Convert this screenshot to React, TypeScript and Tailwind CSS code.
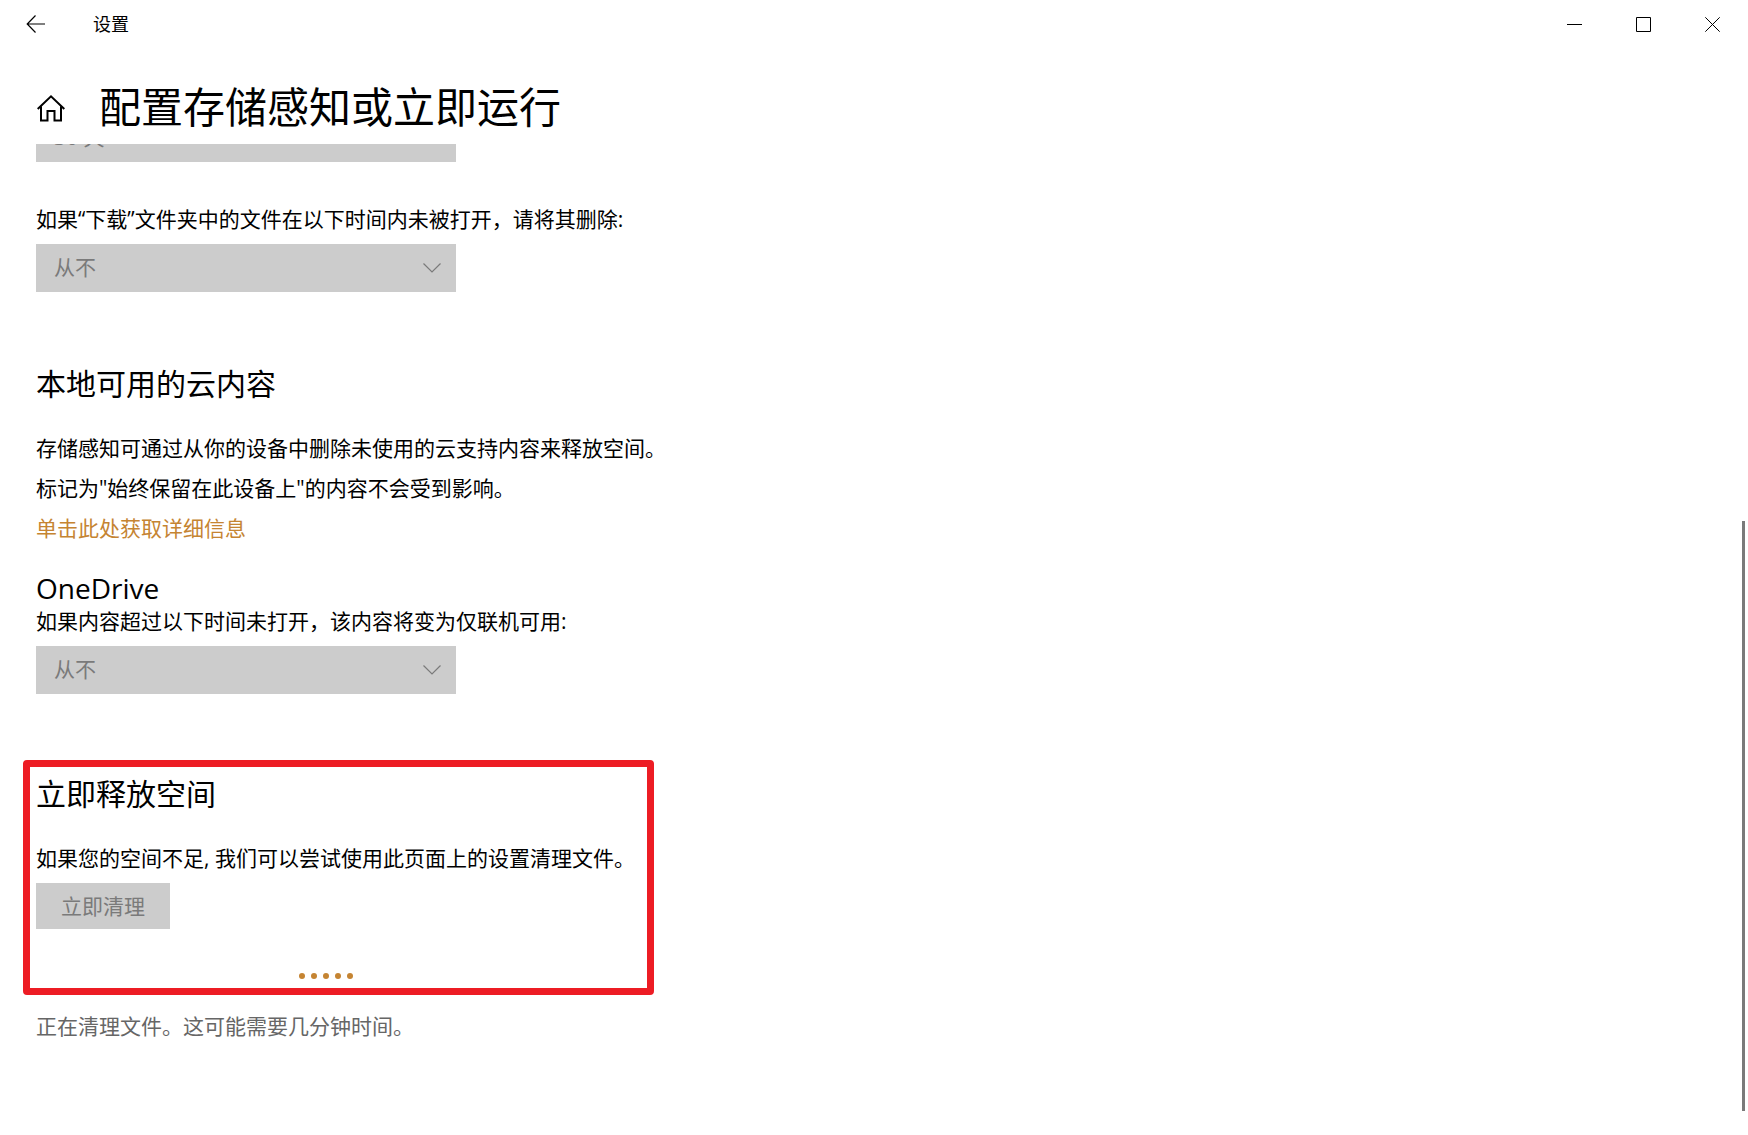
import { useId } from 'react';
import type { ReactNode } from 'react';

type DropdownProps = {
	label: ReactNode;
	value: string;
	hideLabel?: boolean;
};

const Dropdown = ({ label, value, hideLabel = false }: DropdownProps) => {
	const id = useId();
	return (
		<div className="flex w-full flex-col gap-[11px]">
			<label htmlFor={id} className={hideLabel ? 'sr-only' : 'leading-7'}>
				{label}
			</label>
			<div className="relative w-full max-w-[420px]">
				<select
					id={id}
					disabled
					className="block h-12 w-full appearance-none rounded-none bg-[#cccccc] pl-[18px] pr-12 text-[#7a7a7a]"
				>
					<option>{value}</option>
				</select>
				<svg
					className="pointer-events-none absolute right-[14px] top-[18px]"
					width="20"
					height="12"
					viewBox="0 0 20 12"
					fill="none"
					stroke="#7a7a7a"
					strokeWidth="1.2"
				>
					<path d="M1.5 1.5 10 10l8.500-8.500" />
				</svg>
			</div>
		</div>
	);
};

const TitleBar = () => {
	return (
		<header className="flex h-12 items-center pr-px">
			<button aria-label="返回" className="flex h-12 w-[72px] items-center justify-center">
				<svg width="20" height="19" viewBox="0 0 20 19" fill="none" stroke="#000" strokeWidth="1.2">
					<path d="M19 9H1.500M9.500.500 1.200 9l8.300 8.500" />
				</svg>
			</button>
			<span className="ml-[21px] grow text-lg leading-7">设置</span>
			<button aria-label="最小化" className="flex h-12 w-[69px] items-center justify-center">
				<svg width="15" height="15" viewBox="0 0 15 15" stroke="#000">
					<path d="M0 7.500h15" />
				</svg>
			</button>
			<button aria-label="最大化" className="flex h-12 w-[69px] items-center justify-center">
				<svg width="15" height="15" viewBox="0 0 15 15" fill="none" stroke="#000">
					<path d="M.5.5h14v14H.5z" />
				</svg>
			</button>
			<button aria-label="关闭" className="flex h-12 w-[69px] items-center justify-center">
				<svg width="15" height="15" viewBox="0 0 15 15" stroke="#000">
					<path d="m.3.3 14.400 14.400M14.700.3.300 14.700" />
				</svg>
			</button>
		</header>
	);
};

const Home = () => {
	return (
		<button aria-label="主页" className="flex h-12 w-[30px] items-center justify-center">
			<svg width="30" height="28" viewBox="0 0 30 28" fill="none" stroke="#000" strokeWidth="2">
				<path d="M1.700 15 15 2.300l13.300 12.700" />
				<path d="M5 12.300V26.500h6.500v-9.500h7v9.500H25V12.300" />
			</svg>
		</button>
	);
};

const App = () => {
	return (
		<div className="flex h-screen min-h-[1100px] flex-col bg-white font-['Open_Sans','Noto_Sans_CJK_SC',sans-serif] text-[21px] text-black">
			<TitleBar />
			<div className="flex items-center gap-[33px] pb-3 pl-9 pt-9">
				<Home />
				<h1 className="pb-[2px] text-[42px] leading-[46px]">配置存储感知或立即运行</h1>
			</div>
			<div className="flex min-h-0 grow">
				<main className="flex grow flex-col items-start pl-9">
					{/* scrolled most of the way under the page heading */}
					<div className="flex h-[18px] w-full shrink-0 items-end overflow-hidden">
						<Dropdown hideLabel label="删除回收站中的文件" value="30 天" />
					</div>

					<div className="mt-[43px] w-full">
						<Dropdown label="如果“下载”文件夹中的文件在以下时间内未被打开，请将其删除:" value="从不" />
					</div>

					<h2 className="mt-[72px] text-3xl leading-10">本地可用的云内容</h2>
					<div className="mt-6 leading-10">
						<p>存储感知可通过从你的设备中删除未使用的云支持内容来释放空间。</p>
						<p>标记为"始终保留在此设备上"的内容不会受到影响。</p>
						<a href="#details" className="text-[#c58432]">
							单击此处获取详细信息
						</a>
					</div>

					<h3 className="mt-[21px] text-[28px] leading-[38px]">OneDrive</h3>
					<Dropdown label="如果内容超过以下时间未打开，该内容将变为仅联机可用:" value="从不" />

					<section className="-ml-[13px] mt-[66px] w-full max-w-[631px] rounded border-[7px] border-[#ed1c24] px-[6px] pb-[9px] pt-[7px]">
						<h2 className="text-3xl leading-10">立即释放空间</h2>
						<p className="mt-[30px] leading-7">
							如果您的空间不足, 我们可以尝试使用此页面上的设置清理文件。
						</p>
						<button
							disabled
							className="mt-[11px] block h-[46px] bg-[#cccccc] px-[25px] pt-[2px] text-[#7a7a7a]"
						>
							立即清理
						</button>
						<div
							role="progressbar"
							aria-label="正在清理文件"
							className="mt-11 flex max-w-[580px] justify-center gap-[6px]"
						>
							{[0, 1, 2, 3, 4].map(dot => (
								<span key={dot} className="size-[6px] rounded-full bg-[#c58432]" />
							))}
						</div>
					</section>
					<p className="mt-[17px] leading-7 text-[#666666]">正在清理文件。这可能需要几分钟时间。</p>
				</main>
				<div className="flex flex-col justify-end pb-6 pr-[3px]">
					<div className="h-[61%] w-[3px] bg-[#7a7a7a]" />
				</div>
			</div>
		</div>
	);
};

export default App;
